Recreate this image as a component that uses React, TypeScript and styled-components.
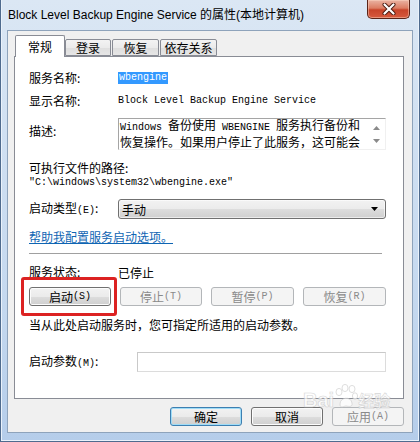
import styled, { createGlobalStyle } from 'styled-components';

const GlobalStyle = createGlobalStyle`
  html, body {
    margin: 0;
    padding: 0;
    background: #fff;
  }
  body {
    font-family: "Noto Sans CJK SC", "Liberation Sans", sans-serif;
    font-size: 12px;
    color: #000;
  }
`;

const Win = styled.div`
  position: relative;
  width: 420px;
  height: 442px;
  box-sizing: border-box;
  display: flex;
  flex-direction: column;
  overflow: hidden;
  border: 1px solid #4f6b8e;
  border-top: none;
  background: linear-gradient(180deg, #dbe7f4 0%, #d0e0f2 30%, #c4d8ef 70%, #b5cdea 100%);
  box-shadow: inset 1px 0 0 #eaf2fb, inset -1px 0 0 #eaf2fb, inset 0 -1px 0 #eaf2fb;
`;

const TitleBar = styled.div`
  height: 30px;
  display: flex;
  justify-content: space-between;
  align-items: flex-start;
  padding: 0 9px 0 7px;
`;

const Title = styled.div`
  font-family: "Liberation Sans", "Noto Sans CJK SC", sans-serif;
  font-size: 12px;
  line-height: 30px;
  color: #000;
  white-space: nowrap;
`;

const CloseButton = styled.div`
  width: 43px;
  height: 19px;
  box-sizing: border-box;
  display: flex;
  align-items: center;
  justify-content: center;
  border: 1px solid #5a2418;
  border-top: none;
  border-radius: 0 0 5px 5px;
  background: linear-gradient(180deg, #eab3a3 0%, #dc7d63 45%, #c8442a 55%, #d65a3e 100%);
  box-shadow: inset 0 0 0 1px rgba(255, 220, 200, 0.45);
`;

const Client = styled.div`
  flex: 1;
  margin: 0 6px;
  display: flex;
  flex-direction: column;
  background: #f0f0f0;
  border: 1px solid #8ea3bb;
  padding: 4px 8px 0 6px;
`;

const TabRow = styled.div`
  display: flex;
  align-items: flex-end;
  height: 21px;
  padding-left: 1px;
`;

const Tab = styled.div<{ $active?: boolean; $w: number; $gap?: number }>`
  box-sizing: border-box;
  width: ${p => p.$w}px;
  margin-left: ${p => p.$gap ?? 0}px;
  height: ${p => (p.$active ? 22 : 17)}px;
  margin-bottom: ${p => (p.$active ? -1 : 0)}px;
  position: relative;
  z-index: ${p => (p.$active ? 1 : 0)};
  border: 1px solid #898c95;
  border-bottom: ${p => (p.$active ? 'none' : '1px solid #898c95')};
  border-radius: 2px 2px 0 0;
  background: ${p => (p.$active ? '#fff' : 'linear-gradient(180deg, #f3f3f3 0%, #ebebeb 50%, #dedede 51%, #e6e6e6 100%)')};
  font-size: 12px;
  line-height: ${p => (p.$active ? 21 : 16)}px;
  text-align: center;
`;

const Panel = styled.div`
  box-sizing: border-box;
  height: 343px;
  background: #fff;
  border: 1px solid #898c95;
  padding: 0 17px 0 14px;
  display: flex;
  flex-direction: column;
`;

const Row = styled.div<{ $h: number; $mt: number; $top?: boolean }>`
  display: flex;
  align-items: ${p => (p.$top ? 'flex-start' : 'center')};
  height: ${p => p.$h}px;
  margin-top: ${p => p.$mt}px;
  flex-shrink: 0;
`;

const Label = styled.div<{ $w?: number; $mt?: number }>`
  width: ${p => p.$w ?? 89}px;
  flex-shrink: 0;
  margin-top: ${p => p.$mt ?? 0}px;
  line-height: 16px;
  white-space: nowrap;
`;

const Mono = styled.span`
  font-family: "Liberation Mono", "Noto Sans CJK SC", monospace;
  font-size: 10px;
`;

const Selected = styled.span`
  display: inline-block;
  height: 12px;
  line-height: 12px;
  padding: 0 1px;
  background: #3399ff;
  color: #fff;
  font-family: "Liberation Mono", monospace;
  font-size: 10px;
`;

const Value = styled.div`
  font-family: "Liberation Mono", "Noto Sans CJK SC", monospace;
  font-size: 10px;
  line-height: 16px;
  white-space: nowrap;
`;

const Box = styled.div<{ $h: number; $light?: boolean }>`
  flex: 1;
  height: ${p => p.$h}px;
  box-sizing: border-box;
  display: flex;
  border-top: 1px solid ${p => (p.$light ? '#c9c9c9' : '#a5a5a5')};
  border-left: 1px solid ${p => (p.$light ? '#c9c9c9' : '#a5a5a5')};
  border-right: 1px solid ${p => (p.$light ? '#dcdcdc' : '#f0f0f0')};
  border-bottom: 1px solid ${p => (p.$light ? '#dcdcdc' : '#f0f0f0')};
`;

const DescText = styled.div`
  flex: 1;
  margin-top: -1px;
  padding-left: 1px;
  line-height: 14px;
  white-space: nowrap;
`;

const ScrollCol = styled.div`
  width: 18px;
  display: flex;
  flex-direction: column;
  align-items: center;
  justify-content: space-between;
  padding: 7px 0 6px;
  box-sizing: border-box;
`;

const Select = styled.div`
  flex: 1;
  height: 20px;
  box-sizing: border-box;
  display: flex;
  align-items: center;
  justify-content: space-between;
  padding: 0 7px 0 3px;
  border: 1px solid #707070;
  border-radius: 3px;
  background: linear-gradient(180deg, #f2f2f2 0%, #ebebeb 50%, #dddddd 51%, #cfcfcf 100%);
  box-shadow: inset 0 0 0 1px rgba(255, 255, 255, 0.6);
  font-size: 12px;
`;

const Link = styled.a`
  color: #0f65b3;
  text-decoration: underline;
  line-height: 16px;
  cursor: pointer;
`;

const Separator = styled.div`
  height: 0;
  margin: 8px 4px 0 0;
  border-top: 1px solid #a0a0a0;
  border-bottom: 1px solid #fff;
  flex-shrink: 0;
`;

const ButtonRow = styled.div`
  display: flex;
  justify-content: space-between;
  height: 19px;
  margin-top: 7px;
  flex-shrink: 0;
`;

const Highlight = styled.div`
  position: relative;
  &::after {
    content: '';
    position: absolute;
    left: -8px;
    right: -6px;
    top: -10px;
    bottom: -10px;
    border: 3px solid #dc2222;
    border-radius: 3px;
    pointer-events: none;
  }
`;

const Button = styled.div<{ $w: number; $disabled?: boolean; $default?: boolean }>`
  width: ${p => p.$w}px;
  height: 19px;
  box-sizing: border-box;
  display: flex;
  align-items: center;
  justify-content: center;
  font-size: 12px;
  border-radius: 3px;
  border: 1px solid ${p => (p.$disabled ? '#b3b6b9' : p.$default ? '#3c7fb1' : '#707070')};
  color: ${p => (p.$disabled ? '#8a8a8a' : '#000')};
  background: ${p =>
    p.$disabled
      ? '#f4f4f4'
      : 'linear-gradient(180deg, #f2f2f2 0%, #ebebeb 50%, #dddddd 51%, #cfcfcf 100%)'};
  box-shadow: ${p =>
    p.$disabled ? 'none' : p.$default ? 'inset 0 0 0 1px #9fdcf7' : 'inset 0 0 0 1px #fcfcfc'};
`;

const Footer = styled.div`
  display: flex;
  justify-content: flex-end;
  gap: 9px;
  margin-top: 8px;
`;

const BottomEdge = styled.div`
  height: 8px;
`;

const Watermark = styled.div`
  position: absolute;
  left: 302px;
  top: 384px;
  display: flex;
  align-items: flex-end;
  opacity: 0.75;
  pointer-events: none;
`;

const WmText = styled.span<{ $size: number }>`
  font-family: "Liberation Sans", "Noto Sans CJK SC", sans-serif;
  font-weight: bold;
  font-size: ${p => p.$size}px;
  line-height: 1;
  color: #fff;
  -webkit-text-stroke: 0.6px #c9c9c9;
`;

const Up = () => (
  <svg width="7" height="4" viewBox="0 0 7 4">
    <path d="M0 4 L3.5 0 L7 4 Z" fill="#8a8a8a" />
  </svg>
);

const Down = ({ color = '#8a8a8a' }: { color?: string }) => (
  <svg width="7" height="4" viewBox="0 0 7 4">
    <path d="M0 0 L3.5 4 L7 0 Z" fill={color} />
  </svg>
);

export default function App() {
  return (
    <>
      <GlobalStyle />
      <Win>
        <TitleBar>
          <Title>Block Level Backup Engine Service 的属性(本地计算机)</Title>
          <CloseButton>
            <svg width="14" height="12" viewBox="0 0 14 12">
              <path d="M2.5 1.5 L11.5 10.5 M11.5 1.5 L2.5 10.5" stroke="#4a1a10" strokeWidth="4" strokeLinecap="round" />
              <path d="M2.5 1.5 L11.5 10.5 M11.5 1.5 L2.5 10.5" stroke="#fff" strokeWidth="2.2" strokeLinecap="round" />
            </svg>
          </CloseButton>
        </TitleBar>

        <Client>
          <TabRow>
            <Tab $active $w={50}>常规</Tab>
            <Tab $w={46}>登录</Tab>
            <Tab $w={47} $gap={1}>恢复</Tab>
            <Tab $w={57} $gap={1}>依存关系</Tab>
          </TabRow>

          <Panel>
            <Row $h={16} $mt={13}>
              <Label>服务名称:</Label>
              <Selected>wbengine</Selected>
            </Row>
            <Row $h={16} $mt={7}>
              <Label>显示名称:</Label>
              <Value>Block Level Backup Engine Service</Value>
            </Row>
            <Row $h={32} $mt={9} $top>
              <Label $mt={5}>描述:</Label>
              <Box $h={32}>
                <DescText>
                  <div><Mono>Windows </Mono>备份使用<Mono> WBENGINE </Mono>服务执行备份和</div>
                  <div>恢复操作。如果用户停止了此服务，这可能会</div>
                </DescText>
                <ScrollCol>
                  <Up />
                  <Down />
                </ScrollCol>
              </Box>
            </Row>
            <Row $h={15} $mt={10}>
              <Label>可执行文件的路径:</Label>
            </Row>
            <Row $h={16} $mt={0}>
              <Value>"C:\windows\system32\wbengine.exe"</Value>
            </Row>
            <Row $h={20} $mt={8}>
              <Label>启动类型<Mono>(E)</Mono>:</Label>
              <Select>
                <span>手动</span>
                <Down color="#000" />
              </Select>
            </Row>
            <Row $h={16} $mt={10}>
              <Link>帮助我配置服务启动选项。</Link>
            </Row>
            <Separator />
            <Row $h={16} $mt={9}>
              <Label>服务状态:</Label>
              <span>已停止</span>
            </Row>
            <ButtonRow>
              <Highlight>
                <Button $w={82}>启动<Mono>(S)</Mono></Button>
              </Highlight>
              <Button $w={82} $disabled>停止<Mono>(T)</Mono></Button>
              <Button $w={83} $disabled>暂停<Mono>(P)</Mono></Button>
              <Button $w={83} $disabled>恢复<Mono>(R)</Mono></Button>
            </ButtonRow>
            <Row $h={16} $mt={11}>
              <Label>当从此处启动服务时，您可指定所适用的启动参数。</Label>
            </Row>
            <Row $h={20} $mt={19}>
              <Label $w={108}>启动参数<Mono>(M)</Mono>:</Label>
              <Box $h={20} $light />
            </Row>
          </Panel>

          <Footer>
            <Button $w={72} $default>确定</Button>
            <Button $w={72}>取消</Button>
            <Button $w={72} $disabled>应用<Mono>(A)</Mono></Button>
          </Footer>
        </Client>
        <BottomEdge />

        <Watermark>
          <WmText $size={20}>Bai</WmText>
          <svg width="24" height="26" viewBox="0 0 24 26">
            <g fill="#fff" stroke="#c9c9c9" strokeWidth="0.8">
              <ellipse cx="5" cy="8" rx="3" ry="3.6" />
              <ellipse cx="11" cy="4" rx="3" ry="3.6" />
              <ellipse cx="18" cy="5" rx="3" ry="3.6" />
              <ellipse cx="21" cy="12" rx="2.6" ry="3.2" />
              <path d="M6 20 C6 13 17 12 18 19 C19 24 13 22 12 22 C10 22 6 25 6 20 Z" />
            </g>
          </svg>
          <WmText $size={16}>经验</WmText>
        </Watermark>
      </Win>
    </>
  );
}
